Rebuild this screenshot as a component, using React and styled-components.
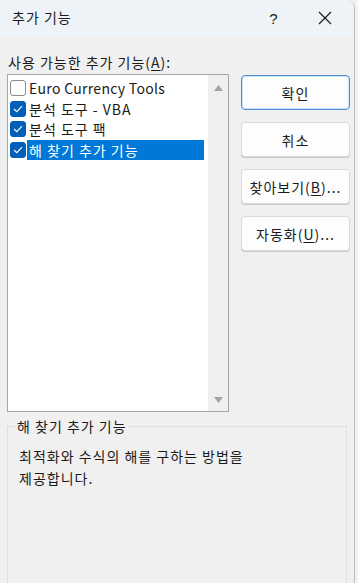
import React from 'react';
import styled, { createGlobalStyle } from 'styled-components';

// styled-components_________________________________

const GlobalStyle = createGlobalStyle`
html, body {
    margin: 0;
    padding: 0;
    background: #f3f3f3;
}
body {
    font-family: "Noto Sans CJK KR", "Noto Sans", sans-serif;
    font-size: 14px;
    letter-spacing: 1px;
    color: #1a1a1a;
}`;

const Dialog = styled.div`
width: 355px;
height: 583px;
background: #f0f0f0;
border-right: 1px solid #bcbcbc;
border-top-right-radius: 8px;
overflow: hidden;
display: flex;
flex-direction: column;
box-sizing: border-box;`;

const TitleBar = styled.div`
height: 36px;
flex: none;
background: #eef3f8;
display: flex;
align-items: center;
padding-left: 12px;
font-size: 14px;`;

const Title = styled.div`
flex: 1;
line-height: 1;
margin-top: -2px;`;

const TitleButton = styled.div`
width: ${props => props.wide ? 58 : 44}px;
height: 36px;
display: flex;
align-items: center;
justify-content: center;
font-family: "Liberation Sans", sans-serif;
font-size: 15px;`;

const Body = styled.div`
flex: 1;
display: flex;
flex-direction: column;
padding: 16px 0 0 7px;`;

const Label = styled.div`
padding-left: 1px;
line-height: 20px;
height: 22px;`;

const Underline = styled.span`
text-decoration: underline;
text-underline-offset: 2px;`;

const Main = styled.div`
display: flex;
align-items: flex-start;
gap: 12px;`;

const ListBox = styled.div`
width: 222px;
height: 338px;
box-sizing: border-box;
border: 1px solid #a6a6a6;
background: #ffffff;
display: flex;`;

const Items = styled.div`
flex: 1;
padding-top: 3px;
padding-left: 2px;`;

const Row = styled.div`
height: 20.5px;
display: flex;
align-items: center;
gap: 1px;`;

const Box = styled.div`
width: 16px;
height: 16px;
flex: none;
box-sizing: border-box;
border-radius: 3px;
border: 1px solid ${props => props.checked ? "#005fb8" : "#8b8b8b"};
background: ${props => props.checked ? "#005fb8" : "#ffffff"};
display: flex;
align-items: center;
justify-content: center;`;

const ItemText = styled.div`
padding: 0 2px 0 2px;
width: 173px;
height: 20px;
line-height: 20px;
white-space: nowrap;
letter-spacing: ${props => props.latin ? "0.3px" : "1px"};
background: ${props => props.selected ? "#0078d7" : "transparent"};
color: ${props => props.selected ? "#ffffff" : "#1a1a1a"};`;

const ScrollBar = styled.div`
width: 20px;
background: #f0f0f0;
display: flex;
flex-direction: column;
justify-content: space-between;
align-items: center;
padding: 10px 0 8px;`;

const Buttons = styled.div`
display: flex;
flex-direction: column;
gap: 12px;
padding-top: 1px;`;

const Button = styled.div`
width: 109px;
height: 35px;
box-sizing: border-box;
border-radius: 4px;
background: #fdfdfd;
border: 1px solid ${props => props.primary ? "#4a90d9" : "#dadada"};
box-shadow: ${props => props.primary ? "inset 0 0 0 1px #cfe2f6" : "0 1px 0 #c9c9c9"};
display: flex;
align-items: center;
justify-content: center;
font-size: 14px;`;

const Group = styled.fieldset`
margin: 6px 7px 0 0;
padding: 11px 12px 0 11px;
flex: 1;
border: 1px solid #e0e0e0;
border-bottom: none;
min-width: 0;`;

const Legend = styled.legend`
padding: 0 1px;
margin-left: -3px;
font-size: 14px;
line-height: 16px;`;

const Description = styled.div`
font-size: 14px;
line-height: 22px;`;

// components_________________________________

function Check({ checked }) {
    return (
        <Box checked={checked}>
            {checked ? (
                <svg width="10" height="8" viewBox="0 0 10 8">
                    <path d="M1 4 L3.8 6.6 L9 1.2" fill="none" stroke="#ffffff" strokeWidth="1.2" />
                </svg>
            ) : null}
        </Box>
    );
}

function Arrow({ down }) {
    return (
        <svg width="9" height="6" viewBox="0 0 9 6">
            <path d={down ? "M0 0 L9 0 L4.5 6 Z" : "M0 6 L9 6 L4.5 0 Z"} fill="#a3a3a3" />
        </svg>
    );
}

const items = [
    { text: "Euro Currency Tools", checked: false, latin: true },
    { text: "분석 도구 - VBA", checked: true },
    { text: "분석 도구 팩", checked: true },
    { text: "해 찾기 추가 기능", checked: true, selected: true },
];

function App() {
    return (
        <>
            <GlobalStyle />
            <Dialog>
                <TitleBar>
                    <Title>추가 기능</Title>
                    <TitleButton>?</TitleButton>
                    <TitleButton wide>
                        <svg width="14" height="14" viewBox="0 0 14 14">
                            <path d="M1 1 L13 13 M13 1 L1 13" stroke="#1a1a1a" strokeWidth="1.2" />
                        </svg>
                    </TitleButton>
                </TitleBar>
                <Body>
                    <Label>사용 가능한 추가 기능(<Underline>A</Underline>):</Label>
                    <Main>
                        <ListBox>
                            <Items>
                                {items.map((it, idx) => (
                                    <Row key={idx}>
                                        <Check checked={it.checked} />
                                        <ItemText selected={it.selected} latin={it.latin}>{it.text}</ItemText>
                                    </Row>
                                ))}
                            </Items>
                            <ScrollBar>
                                <Arrow />
                                <Arrow down />
                            </ScrollBar>
                        </ListBox>
                        <Buttons>
                            <Button primary>확인</Button>
                            <Button>취소</Button>
                            <Button>찾아보기(<Underline>B</Underline>)...</Button>
                            <Button>자동화(<Underline>U</Underline>)...</Button>
                        </Buttons>
                    </Main>
                    <Group>
                        <Legend>해 찾기 추가 기능</Legend>
                        <Description>
                            최적화와 수식의 해를 구하는 방법을<br />
                            제공합니다.
                        </Description>
                    </Group>
                </Body>
            </Dialog>
        </>
    );
}

export default App;
